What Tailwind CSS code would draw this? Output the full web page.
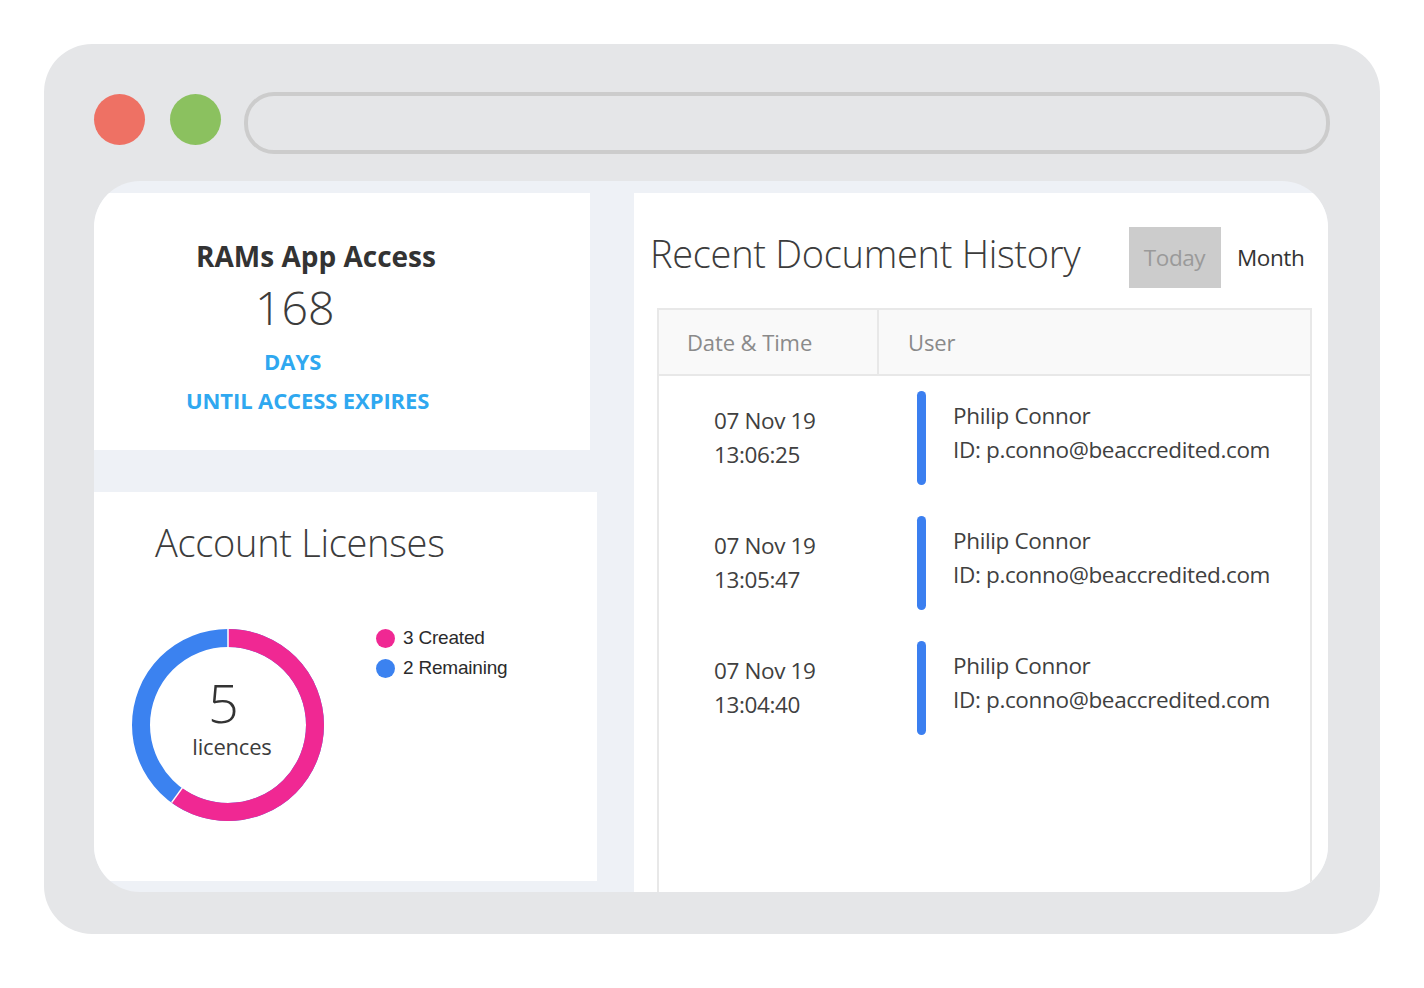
<!DOCTYPE html>
<html lang="en">
<head>
  <meta charset="UTF-8">
  <title>Account Dashboard</title>
  <script src="https://cdn.jsdelivr.net/npm/@tailwindcss/browser@4"></script>
</head>
<body class="bg-white font-['Open_Sans',sans-serif] text-[#404040]">
  <div class="pt-[44px] pl-[44px]">
    <!-- Browser frame -->
    <div class="w-[1336px] h-[890px] rounded-[48px] bg-[#e5e6e8] pt-[48px] pl-[50px]">
      <div class="flex items-start w-[1236px] h-[62px]">
        <div class="w-[51px] h-[51px] mt-[2px] rounded-full bg-[#ee7164]"></div>
        <div class="w-[51px] h-[51px] mt-[2px] rounded-full bg-[#8bc15f] ml-[25px]"></div>
        <div class="flex-1 h-[62px] rounded-[30px] border-4 border-[#cccccc] ml-[23px]"></div>
      </div>

      <!-- Screen -->
      <div class="flex w-[1234px] h-[711px] mt-[27px] pt-[12px] rounded-[46px] bg-[#eef1f6] overflow-hidden">
        <!-- Left column -->
        <div class="w-[503px] shrink-0">
          <div class="w-[496px] h-[257px] bg-white pt-[44px]">
            <h2 class="ml-[102px] text-[28px] leading-[38px] font-bold text-[#333333]">RAMs App Access</h2>
            <p class="ml-[161px] mt-[3px] text-[46.5px] leading-[58px] font-light text-[#3c3c3c]">168</p>
            <p class="ml-[170px] mt-[10px] text-[22px] leading-[30px] font-bold text-[#2fa8f0]">DAYS</p>
            <p class="ml-[92px] mt-[9px] text-[22px] leading-[30px] font-bold text-[#2fa8f0] tracking-[-0.1px]">UNTIL ACCESS EXPIRES</p>
          </div>

          <div class="w-[503px] h-[389px] bg-white mt-[42px] pt-[23px]">
            <h2 class="ml-[61px] text-[38px] leading-[54px] font-light text-[#3c3c3c] tracking-[-0.3px]">Account Licenses</h2>
            <div class="flex mt-[60px]">
              <!-- Donut -->
              <div class="relative w-[192px] h-[192px] ml-[38px] shrink-0">
                <svg viewBox="0 0 192 192" class="w-[192px] h-[192px] -rotate-90">
                  <circle cx="96" cy="96" r="87" fill="none" stroke="#3b82f0" stroke-width="18" />
                  <circle cx="96" cy="96" r="87" fill="none" stroke="#f02893" stroke-width="18" stroke-dasharray="328 219" />
                  <line x1="96" y1="78" x2="96" y2="0" stroke="#ffffff" stroke-width="1.5" transform="rotate(90 96 96)" />
                  <line x1="96" y1="78" x2="96" y2="0" stroke="#ffffff" stroke-width="1.5" transform="rotate(306 96 96)" />
                </svg>
                <div class="absolute inset-0 flex flex-col items-center">
                  <span class="mt-[47px] ml-[-9px] text-[54px] leading-[52px] font-light text-[#333333]">5</span>
                  <span class="ml-[8px] mt-[3px] text-[22px] leading-[30px] text-[#3c3c3c] tracking-[-0.2px]">licences</span>
                </div>
              </div>
              <!-- Legend -->
              <div class="ml-[52px] mt-[-6px] font-['Liberation_Sans',sans-serif] text-[19px] leading-[30px] text-[#2b2b2b] tracking-[-0.2px]">
                <div class="flex items-center">
                  <span class="w-[19px] h-[19px] rounded-full bg-[#f02893] mr-[8px]"></span>3 Created
                </div>
                <div class="flex items-center">
                  <span class="w-[19px] h-[19px] rounded-full bg-[#3b82f0] mr-[8px]"></span>2 Remaining
                </div>
              </div>
            </div>
          </div>
        </div>

        <!-- Right panel -->
        <div class="w-[694px] ml-[37px] bg-white shrink-0">
          <div class="flex h-[115px] pt-[34px]">
            <h2 class="ml-[16px] w-[479px] mt-[-2px] text-[38px] leading-[56px] font-light text-[#3c3c3c] tracking-[-0.3px] whitespace-nowrap">Recent Document History</h2>
            <div class="w-[92px] h-[61px] bg-[#cccccc] text-[#9a9a9a] text-[22.5px] pt-[1px] pr-[1px] tracking-[-0.4px] flex items-center justify-center">Today</div>
            <div class="ml-[16px] h-[61px] text-[22.5px] pt-[1px] text-[#333333] tracking-[-0.4px] flex items-center">Month</div>
          </div>

          <!-- Table -->
          <div class="w-[655px] h-[584px] ml-[23px] border-x-2 border-t-2 border-[#e8e8e8]">
            <div class="flex h-[66px] bg-[#f9f9f9] border-b-2 border-[#e8e8e8] text-[22px] text-[#8a8a8a] tracking-[-0.1px]">
              <div class="w-[220px] pl-[28px] border-r-2 border-[#e8e8e8] flex items-center">Date &amp; Time</div>
              <div class="pl-[29px] flex items-center">User</div>
            </div>
            <div class="pt-[15px] space-y-[31px]">
              <div class="flex h-[94px]">
                <div class="w-[258px] pl-[55px] pt-[13px] text-[22.5px] leading-[34px] tracking-[-0.37px]">
                  <p>07 Nov 19</p>
                  <p>13:06:25</p>
                </div>
                <div class="w-[9px] h-[94px] rounded-full bg-[#3b7ff0]"></div>
                <div class="pl-[27px] pt-[8px] text-[22.5px] leading-[34px] tracking-[-0.35px]">
                  <p>Philip Connor</p>
                  <p>ID: p.conno@beaccredited.com</p>
                </div>
              </div>
              <div class="flex h-[94px]">
                <div class="w-[258px] pl-[55px] pt-[13px] text-[22.5px] leading-[34px] tracking-[-0.37px]">
                  <p>07 Nov 19</p>
                  <p>13:05:47</p>
                </div>
                <div class="w-[9px] h-[94px] rounded-full bg-[#3b7ff0]"></div>
                <div class="pl-[27px] pt-[8px] text-[22.5px] leading-[34px] tracking-[-0.35px]">
                  <p>Philip Connor</p>
                  <p>ID: p.conno@beaccredited.com</p>
                </div>
              </div>
              <div class="flex h-[94px]">
                <div class="w-[258px] pl-[55px] pt-[13px] text-[22.5px] leading-[34px] tracking-[-0.37px]">
                  <p>07 Nov 19</p>
                  <p>13:04:40</p>
                </div>
                <div class="w-[9px] h-[94px] rounded-full bg-[#3b7ff0]"></div>
                <div class="pl-[27px] pt-[8px] text-[22.5px] leading-[34px] tracking-[-0.35px]">
                  <p>Philip Connor</p>
                  <p>ID: p.conno@beaccredited.com</p>
                </div>
              </div>
            </div>
          </div>
        </div>
      </div>
    </div>
  </div>
</body>
</html>
